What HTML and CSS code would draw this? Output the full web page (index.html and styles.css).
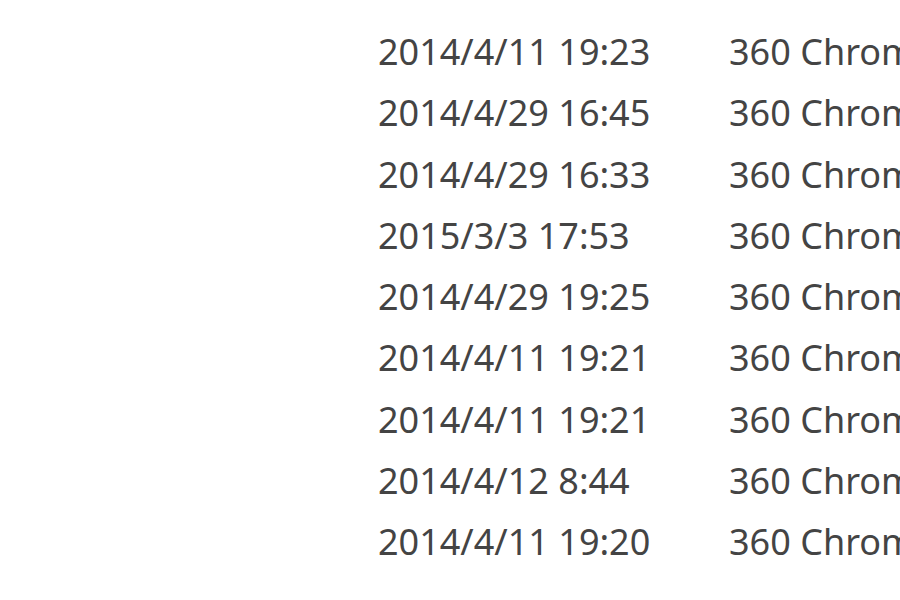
FILE: index.html
```html
<!DOCTYPE html>
<html lang="en">
  <head>
    <meta charset="UTF-8" />
    <link rel="stylesheet" href="styles.css">
    <title>Files</title>
  </head>
  <body>
    <div class="list">
      <div class="row"><span class="date">2014/4/11 19:23</span><span class="type">360 Chrome HTML Document</span></div>
      <div class="row"><span class="date">2014/4/29 16:45</span><span class="type">360 Chrome HTML Document</span></div>
      <div class="row"><span class="date">2014/4/29 16:33</span><span class="type">360 Chrome HTML Document</span></div>
      <div class="row"><span class="date">2015/3/3 17:53</span><span class="type">360 Chrome HTML Document</span></div>
      <div class="row"><span class="date">2014/4/29 19:25</span><span class="type">360 Chrome HTML Document</span></div>
      <div class="row"><span class="date">2014/4/11 19:21</span><span class="type">360 Chrome HTML Document</span></div>
      <div class="row"><span class="date">2014/4/11 19:21</span><span class="type">360 Chrome HTML Document</span></div>
      <div class="row"><span class="date">2014/4/12 8:44</span><span class="type">360 Chrome HTML Document</span></div>
      <div class="row"><span class="date">2014/4/11 19:20</span><span class="type">360 Chrome HTML Document</span></div>
    </div>
  </body>
</html>
```
FILE: styles.css
```css
html,
body {
  margin: 0;
  background-color: #fff;
  overflow: hidden;
}
.list {
  width: 900px;
  height: 600px;
  padding: 21px 0 0 378px;
  box-sizing: border-box;
  overflow: hidden;
  color: #444;
  font-family: "Noto Sans", sans-serif;
  font-size: 36px;
}
.row {
  display: grid;
  grid-template-columns: 351px 1fr;
  height: 61.25px;
  line-height: 61.25px;
  white-space: nowrap;
}
.type {
  overflow: hidden;
}
```
